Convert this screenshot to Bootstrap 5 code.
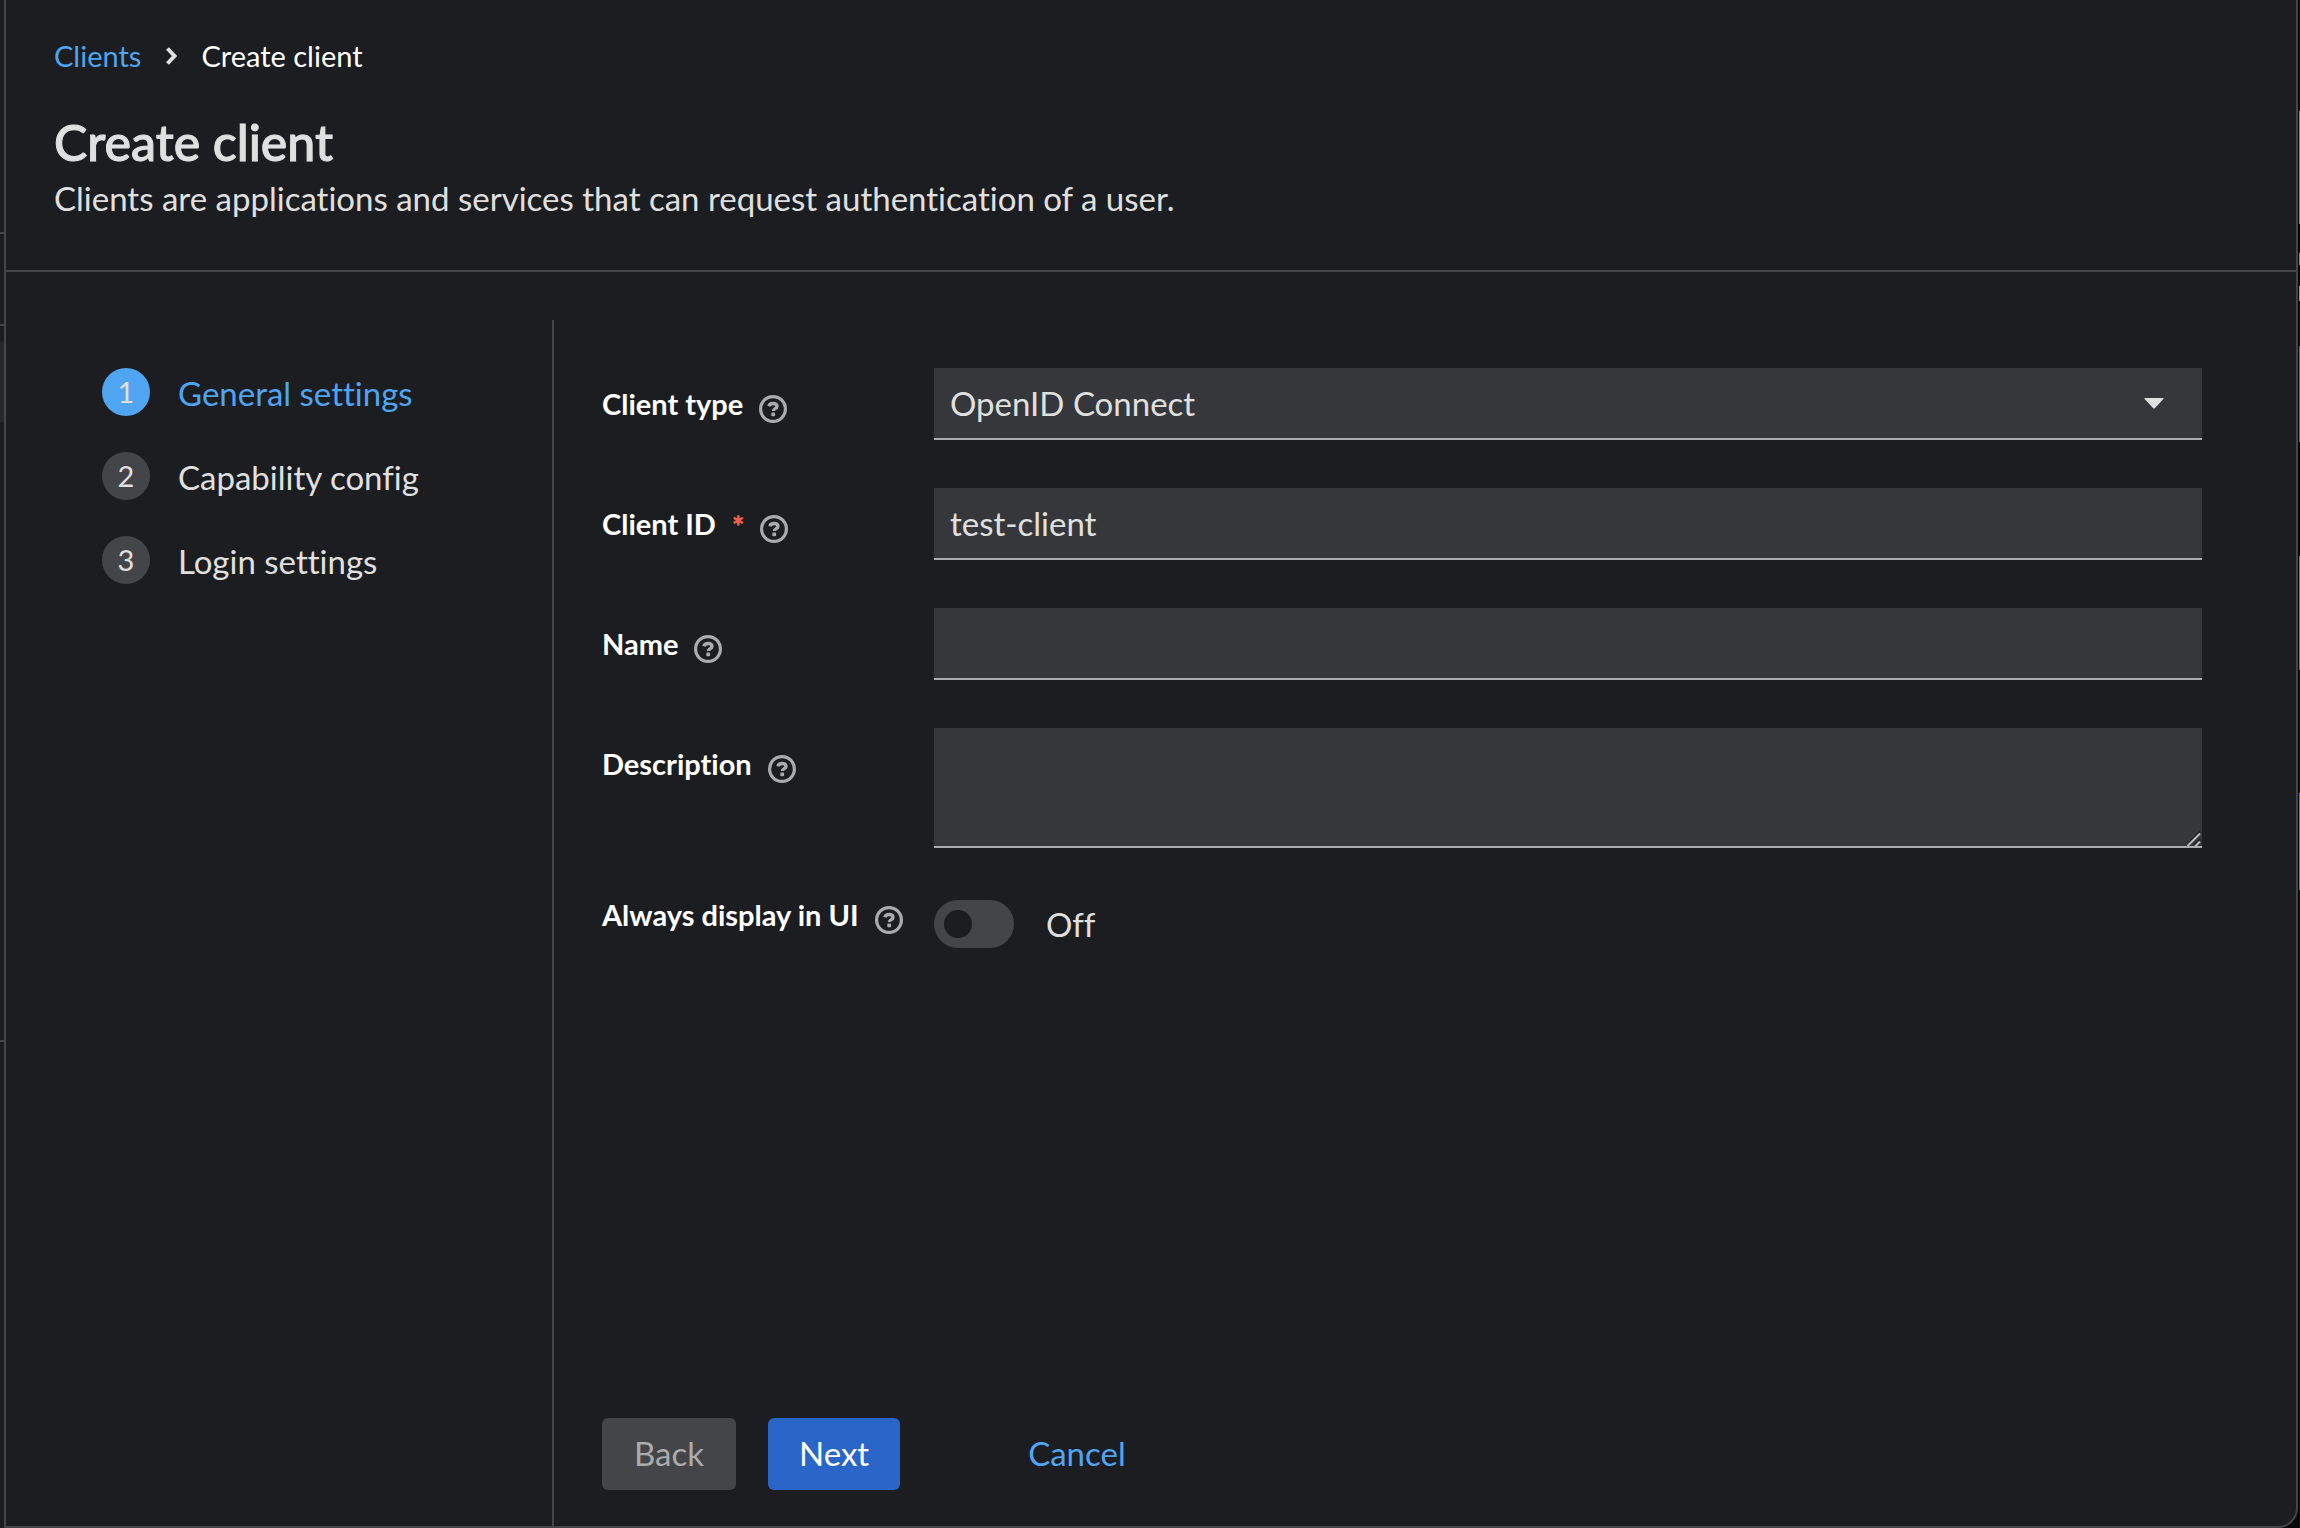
<!DOCTYPE html>
<html lang="en" data-bs-theme="dark">
<head>
<meta charset="utf-8">
<meta name="viewport" content="width=device-width, initial-scale=1">
<title>Create client</title>
<link href="https://cdn.jsdelivr.net/npm/bootstrap@5.3.0/dist/css/bootstrap.min.css" rel="stylesheet">
<style>
  :root {
    --kc-bg: #1b1d21;
    --kc-field: #36373a;
    --kc-line: #444548;
    --kc-muted: #aaabac;
    --kc-text: #e0e0e0;
    --kc-link: #4fa5f2;
    --kc-primary: #2a65c8;
  }
  body {
    background: #0b0907;
    color: var(--kc-text);
    font-family: Lato, "Liberation Sans", sans-serif;
    font-size: 33px;
    line-height: 48px;
    font-variant-ligatures: none;
  }
  a { color: var(--kc-link); text-decoration: none; }
  .kc-rail { width: 4px; background: var(--kc-bg); }
  .kc-rail-top { height: 234px; border-bottom: 2px solid var(--kc-line); }
  .kc-rail-realm { height: 92px; border-bottom: 2px solid var(--kc-line); }
  .kc-rail-active { height: 80px; margin-top: 16px; background: #26282c; }
  .kc-rail-list { height: 620px; border-bottom: 2px solid var(--kc-line); }
  .kc-panel {
    background: var(--kc-bg);
    border: 2px solid var(--kc-line);
    border-top: 0;
    border-bottom-right-radius: 20px;
  }
  .kc-edge {
    width: 2px;
    border-left: 1px solid #050403;
    background: linear-gradient(#15110d 0 111px, #8c8c8c 111px 224px, #0a0907 224px 253px, #8c8c8c 253px 265px, #0a0907 265px 286px, #9a9a9a 286px 301px, #15110d 301px 346px, #3d7ba6 346px 442px, #050403 442px 556px, #777 556px 670px, #17100a 670px 793px, #4a86ac 793px 890px, #15110d 890px);
  }
  .kc-header { padding: 32px 48px 48px; border-bottom: 2px solid var(--kc-line); }
  .kc-crumbs { --bs-breadcrumb-margin-bottom: 30px; font-size: 29px; line-height: 48px; gap: 24px; }
  .kc-crumbs svg { width: 12px; height: 20px; }
  .kc-title { color: var(--kc-text); font-size: 50px; line-height: 64px; -webkit-text-stroke: 1px currentColor; }
  .kc-nav { width: 548px; margin-top: 48px; padding: 48px 64px 48px 96px; border-right: 2px solid var(--kc-line); }
  .kc-step { gap: 28px; color: var(--kc-text); }
  .kc-step-name { padding-top: 3px; line-height: 45px; }
  .kc-num { width: 48px; height: 48px; border-radius: 50%; background: var(--kc-line); color: var(--kc-text); font-size: 29px; padding-bottom: 1px; }
  .kc-step.active { color: var(--kc-link); }
  .kc-step.active .kc-num { background: var(--kc-link); }
  .kc-steps { gap: 36px; }
  .kc-main { padding: 96px 94px 36px 48px; }
  .kc-form { gap: 48px; }
  .kc-cell { width: 332px; padding-top: 12px; gap: 16px; }
  .kc-cell.kc-top { padding-top: 0; line-height: 38px; }
  .kc-cell label { color: #fff; font-size: 29px; font-weight: 700; }
  .kc-req { padding-top: 6px; color: #f0604d; font-size: 29px; line-height: 42px; -webkit-text-stroke: 1px currentColor; }
  .kc-help { margin-top: 9px; color: var(--kc-muted); line-height: 0; }
  .kc-help svg { width: 28px; height: 28px; }
  .kc-form .form-control, .kc-form .form-select {
    height: 72px;
    padding: 11px 16px;
    color: var(--kc-text);
    font-size: 33px;
    line-height: 48px;
    background-color: var(--kc-field);
    border: 0;
    border-bottom: 2px solid var(--kc-muted);
    border-radius: 0;
  }
  .kc-form .form-select {
    background-image: url("data:image/svg+xml,%3Csvg xmlns='http://www.w3.org/2000/svg' viewBox='0 0 20 11'%3E%3Cpath fill='%23e0e0e0' d='M1 0h18q1 0 .4 1L11 10q-1 1-2 0L.6 1Q0 0 1 0z'/%3E%3C/svg%3E");
    background-size: 20px 11px;
    background-position: right 38px center;
  }
  .kc-form textarea.form-control { height: 120px; }
  .kc-form textarea::-webkit-resizer {
    background: url("data:image/svg+xml,%3Csvg xmlns='http://www.w3.org/2000/svg' viewBox='0 0 16 16'%3E%3Cpath d='M0 15.500 14 1.500M8 15.500l6-6' stroke='%231b1d21' stroke-width='1.500'/%3E%3Cpath d='M1 16.500 14 3.500M9 16.500l5-5' stroke='%23bcbcbc' stroke-width='2'/%3E%3C/svg%3E") right bottom / 16px 16px no-repeat;
  }
  .kc-switch.form-switch { margin-top: 4px; padding: 0; min-height: 48px; gap: 32px; }
  .kc-switch .form-check-input {
    width: 80px; height: 48px; margin: 0;
    background-color: var(--kc-line);
    background-image: url("data:image/svg+xml,%3Csvg xmlns='http://www.w3.org/2000/svg' viewBox='0 0 48 48'%3E%3Ccircle cx='24' cy='24' r='14' fill='%231b1d21'/%3E%3C/svg%3E") !important;
    border: 0;
  }
  .kc-actions { gap: 32px; padding-top: 48px; }
  .kc-actions .btn { --bs-btn-font-size: 33px; --bs-btn-line-height: 48px; --bs-btn-padding-x: 32px; --bs-btn-border-radius: 6px; --bs-btn-border-width: 0; padding-top: 11px; padding-bottom: 13px; }
  .kc-back { --bs-btn-disabled-bg: #444548; --bs-btn-disabled-color: #aaabac; --bs-btn-disabled-opacity: 1; }
  .kc-actions .kc-next { --bs-btn-bg: #2a65c8; --bs-btn-color: #fff; --bs-btn-padding-x: 31px; }
  .kc-cancel { --bs-btn-color: #4fa5f2; margin-left: 64px; }
</style>
</head>
<body>
<svg class="d-none" xmlns="http://www.w3.org/2000/svg">
  <symbol id="help" viewBox="0 0 28 28">
    <circle cx="14" cy="14" r="12.400" fill="none" stroke="currentColor" stroke-width="3.200"/>
    <path d="M9.800 11.300C10.300 9.500 11.800 8.500 14 8.500c2.300 0 4 1.100 4 2.900 0 2.400-3.600 2.200-3.600 4.500" fill="none" stroke="currentColor" stroke-width="3.300"/>
    <rect x="12.300" y="17.600" width="3.800" height="3.600" rx=".8" fill="currentColor"/>
  </symbol>
</svg>
<div class="d-flex min-vh-100">
  <div class="kc-rail flex-shrink-0">
    <div class="kc-rail-top"></div>
    <div class="kc-rail-realm"></div>
    <div class="kc-rail-active"></div>
    <div class="kc-rail-list"></div>
  </div>
  <div class="kc-panel d-flex flex-column flex-grow-1">
    <header class="kc-header">
      <nav aria-label="breadcrumb">
        <ol class="breadcrumb kc-crumbs align-items-center mt-0">
          <li><a href="#">Clients</a></li>
          <li class="d-flex" aria-hidden="true"><svg viewBox="0 0 12 20"><path d="M2.500 2.500 9.500 10l-7 7.500" fill="none" stroke="#e0e0e0" stroke-width="4"/></svg></li>
          <li class="text-white" aria-current="page">Create client</li>
        </ol>
      </nav>
      <h1 class="kc-title mb-0">Create client</h1>
      <p class="mb-0">Clients are applications and services that can request authentication of a user.</p>
    </header>
    <div class="d-flex flex-grow-1">
      <nav class="kc-nav flex-shrink-0" aria-label="Wizard steps">
        <ol class="kc-steps list-unstyled d-flex flex-column mb-0">
          <li><a class="kc-step active d-flex align-items-center" href="#" aria-current="step"><span class="kc-num d-flex align-items-center justify-content-center">1</span><span class="kc-step-name">General settings</span></a></li>
          <li><a class="kc-step d-flex align-items-center" href="#"><span class="kc-num d-flex align-items-center justify-content-center">2</span><span class="kc-step-name">Capability config</span></a></li>
          <li><a class="kc-step d-flex align-items-center" href="#"><span class="kc-num d-flex align-items-center justify-content-center">3</span><span class="kc-step-name">Login settings</span></a></li>
        </ol>
      </nav>
      <main class="kc-main d-flex flex-column flex-grow-1">
        <form class="kc-form d-flex flex-column flex-grow-1">
          <div class="d-flex">
            <div class="kc-cell d-flex align-items-center align-self-start flex-shrink-0">
              <label for="type">Client type</label>
              <button type="button" class="kc-help btn p-0 border-0" aria-label="Help for client type"><svg><use href="#help"/></svg></button>
            </div>
            <select id="type" class="form-select"><option>OpenID Connect</option><option>SAML</option></select>
          </div>
          <div class="d-flex">
            <div class="kc-cell d-flex align-items-center align-self-start flex-shrink-0">
              <label for="cid">Client ID</label><span class="kc-req" aria-hidden="true">*</span>
              <button type="button" class="kc-help btn p-0 border-0" aria-label="Help for client ID"><svg><use href="#help"/></svg></button>
            </div>
            <input id="cid" class="form-control" type="text" value="test-client" required>
          </div>
          <div class="d-flex">
            <div class="kc-cell d-flex align-items-center align-self-start flex-shrink-0">
              <label for="cname">Name</label>
              <button type="button" class="kc-help btn p-0 border-0" aria-label="Help for name"><svg><use href="#help"/></svg></button>
            </div>
            <input id="cname" class="form-control" type="text">
          </div>
          <div class="d-flex">
            <div class="kc-cell d-flex align-items-center align-self-start flex-shrink-0">
              <label for="desc">Description</label>
              <button type="button" class="kc-help btn p-0 border-0" aria-label="Help for description"><svg><use href="#help"/></svg></button>
            </div>
            <textarea id="desc" class="form-control"></textarea>
          </div>
          <div class="d-flex">
            <div class="kc-cell kc-top d-flex align-items-center align-self-start flex-shrink-0">
              <label for="always">Always display in UI</label>
              <button type="button" class="kc-help btn p-0 border-0" aria-label="Help for always display in UI"><svg><use href="#help"/></svg></button>
            </div>
            <div class="kc-switch form-check form-switch d-flex align-items-center mb-0">
              <input id="always" class="form-check-input" type="checkbox" role="switch">
              <label for="always">Off</label>
            </div>
          </div>
          <div class="kc-actions d-flex mt-auto">
            <button type="button" class="kc-back btn" disabled>Back</button>
            <button type="submit" class="kc-next btn">Next</button>
            <button type="button" class="kc-cancel btn">Cancel</button>
          </div>
        </form>
      </main>
    </div>
  </div>
  <div class="kc-edge flex-shrink-0"></div>
</div>
<script src="https://cdn.jsdelivr.net/npm/bootstrap@5.3.0/dist/js/bootstrap.bundle.min.js"></script>
</body>
</html>
